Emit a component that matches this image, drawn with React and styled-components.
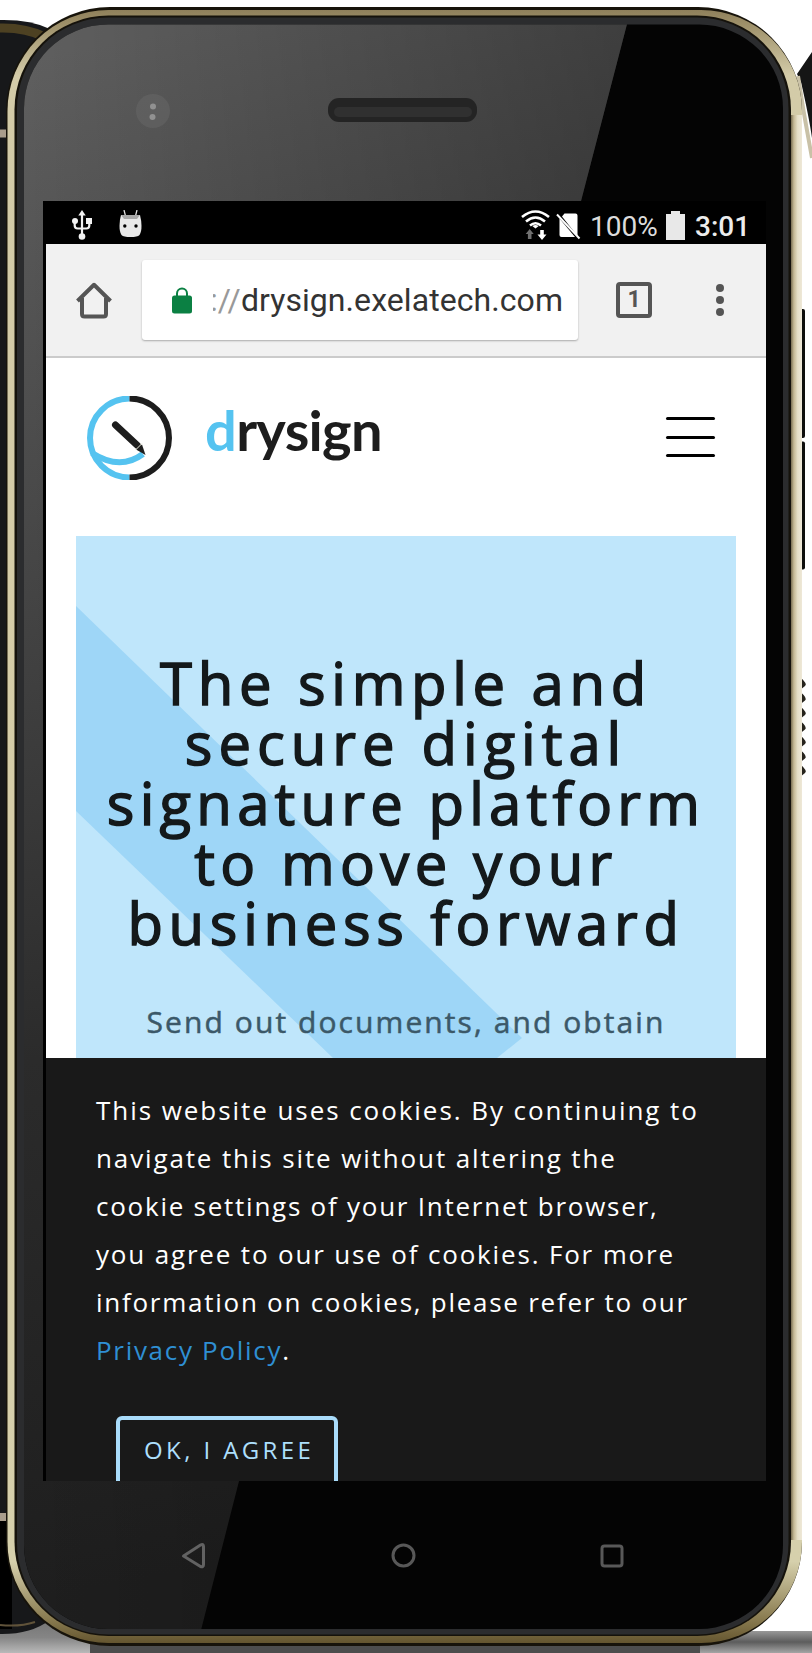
import React from "react";
import styled, { createGlobalStyle } from "styled-components";

const GlobalStyle = createGlobalStyle`
  *, *::before, *::after { box-sizing: border-box; }
  body { margin: 0; background: #fff; }
  h1, p { margin: 0; font-weight: 400; }
  svg { display: block; flex: none; }
`;

const Stage = styled.main`
  position: relative;
  width: 812px;
  height: 1653px;
  overflow: hidden;
  background: #fff;
`;

const DeviceArt = styled.svg`
  position: absolute;
  inset: 0;
`;

const DeviceFace = styled.div`
  position: relative;
  display: flex;
  flex-direction: column;
  padding: 201px 46px 0 43px;
`;

const Screen = styled.section`
  display: flex;
  flex-direction: column;
  width: 723px;
  height: 1280px;
  overflow: hidden;
  background: #000;
`;

const StatusBar = styled.div`
  display: flex;
  align-items: flex-start;
  justify-content: space-between;
  height: 50px;
  padding: 9px 20px 0 29px;
`;

const StatusGroup = styled.div`
  display: flex;
  align-items: flex-start;
  gap: ${(p) => p.$gap}px;
`;

const StatusText = styled.span`
  font: ${(p) => (p.$strong ? 500 : 400)} 28px/34px Roboto, sans-serif;
  color: ${(p) => (p.$strong ? "#ececec" : "#dcdcdc")};
  width: ${(p) => p.$width}px;
  margin-left: ${(p) => p.$shift}px;
`;

const Viewport = styled.div`
  display: flex;
  flex-direction: column;
  flex: 1;
  margin-left: 3px;
  background: #fff;
`;

const Toolbar = styled.div`
  display: flex;
  align-items: center;
  height: 114px;
  flex: none;
  padding: 0 42px 0 30px;
  background: #f1f1f1;
  border-bottom: 2px solid #cbcbcb;
`;

const AddressBar = styled.div`
  display: flex;
  align-items: center;
  width: 436px;
  height: 80px;
  margin: 0 38px 0 30px;
  padding-left: 30px;
  border-radius: 3px;
  background: #fff;
  box-shadow: 0 1px 2px rgba(0, 0, 0, 0.3);
`;

const Url = styled.div`
  margin-left: 21px;
  overflow: hidden;
  white-space: nowrap;
  font: 400 32px/44px Roboto, sans-serif;
  color: #333;
  letter-spacing: 0.07px;
`;

const Scheme = styled.span`
  margin-left: -3px;
  color: #999;
`;

const TabCount = styled.div`
  display: flex;
  align-items: center;
  justify-content: center;
  width: 36px;
  height: 36px;
  margin-right: 64px;
  border: 4px solid #555;
  border-radius: 4px;
  font: 700 23px/28px Roboto, sans-serif;
  color: #555;
`;

const MenuDots = styled.div`
  display: flex;
  flex-direction: column;
  gap: 4px;
`;

const Dot = styled.i`
  width: 8px;
  height: 8px;
  border-radius: 50%;
  background: #555;
`;

const SiteHeader = styled.header`
  display: flex;
  align-items: flex-start;
  height: 178px;
  flex: none;
  padding: 38px 51px 0 40px;
`;

const Wordmark = styled.div`
  margin: 4px 0 0 32px;
  font: 700 56px/60px Lato, sans-serif;
  letter-spacing: -0.67px;
  color: #1d1d1d;
`;

const Accent = styled.span`
  color: #55c3f0;
`;

const Burger = styled.div`
  display: flex;
  flex-direction: column;
  gap: 15.6px;
  margin: 21px 0 0 auto;
`;

const BurgerLine = styled.i`
  width: 49px;
  height: 3px;
  border-radius: 2px;
  background: #000;
`;

const Hero = styled.section`
  position: relative;
  height: 522px;
  flex: none;
  margin: 0 30px;
  padding-top: 117px;
  background: #bfe6fb;
  text-align: center;
  font-family: "Open Sans", sans-serif;
  &::before {
    content: "";
    position: absolute;
    inset: 0;
    background: #9ed6f7;
    clip-path: polygon(0 70px, 446px 502px, 421px 522px, 257px 522px, 0 275px);
  }
`;

const Title = styled.h1`
  position: relative;
  font-size: 58px;
  line-height: 60px;
  color: #14191b;
  -webkit-text-stroke: 1.5px #14191b;
`;

const Line = styled.span`
  display: block;
  white-space: nowrap;
  letter-spacing: ${(p) => p.$track}px;
`;

const Subtitle = styled.p`
  position: relative;
  margin-top: 45px;
  font-size: 30px;
  line-height: 48px;
  color: #3b5868;
  -webkit-text-stroke: 0.5px #3b5868;
`;

const CookieBanner = styled.aside`
  flex: 1;
  padding: 28px 50px 0;
  background: #191919;
  font-family: "Open Sans", sans-serif;
`;

const CookieText = styled.p`
  font-size: 26px;
  line-height: 48px;
  color: #fff;
`;

const PolicyLink = styled.a`
  color: #2f8fd3;
`;

const AgreeButton = styled.button`
  display: block;
  width: 222px;
  height: 80px;
  margin: 42px 0 0 20px;
  padding: 10px 0 23px 24px;
  border: 4px solid #a9dcfb;
  border-radius: 6px;
  background: transparent;
  font: 400 24px/35px "Open Sans", sans-serif;
  letter-spacing: 3.4px;
  text-align: left;
  white-space: nowrap;
  color: #addffc;
`;

const NavKeys = styled.nav`
  display: flex;
  align-items: center;
  justify-content: space-between;
  width: 443px;
  margin: 61px 0 0 138px;
`;

const UsbIcon = () => (
  <svg width="20" height="30" viewBox="0 0 20 30" fill="none" stroke="#f2f2f2" strokeWidth="2.2">
    <path d="M10 4v22M2.7 12v3.5q0 3 3 3h8.6q3 0 3-3V12" />
    <path d="M10 0l3.7 5.5H6.3z" fill="#f2f2f2" stroke="none" />
    <circle cx="3" cy="11" r="3" fill="#f2f2f2" stroke="none" />
    <path d="M14 8h6v6h-6z" fill="#f2f2f2" stroke="none" />
    <circle cx="10" cy="26.5" r="3.3" fill="#f2f2f2" stroke="none" />
  </svg>
);

const RobotIcon = () => (
  <svg width="23" height="28" viewBox="0 0 23 28">
    <path d="M5 0l1.5 6M18 0l-1.5 6" stroke="#ddd" strokeWidth="1.3" />
    <path d="M2 5h19q1.5 6 1.5 11 0 6-2 9-2 2-9 2t-9-2q-2-3-2-9Q.5 10 2 5z" fill="#e8e8e8" />
    <path d="M2 5h19l-3 4H5z" fill="#a8a8a8" />
    <circle cx="5.8" cy="16" r="1.7" />
    <circle cx="17" cy="16" r="1.7" />
  </svg>
);

const WifiIcon = () => (
  <svg width="29" height="30" viewBox="0 0 29 30" fill="none" stroke="#fff" strokeWidth="2.6">
    <path d="M1 7Q14.500-4 28 7M5 11.500q9.500-8 19 0M9 15.500q5.500-4.500 11 0" />
    <path d="M14.500 18.500l-3.200-2.500q3.200-2 6.400 0z" fill="#fff" stroke="none" />
    <path d="M8.700 19l4 5h-2.200v5H6.900v-5H4.700z" fill="#707070" stroke="none" />
    <path d="M21 30l4.500-5.500h-2.700V20h-3.600v4.500h-2.700z" fill="#fff" stroke="none" />
  </svg>
);

const NoSimIcon = () => (
  <svg width="25" height="30" viewBox="0 0 25 30">
    <path d="M8.500 3.500h11q2 0 2 2V26L6 6.500z" fill="#fff" />
    <path d="M3.500 8.500L19 27H5.500q-2 0-2-2z" fill="#fff" />
    <path d="M1 4.500l22.500 24" stroke="#fff" strokeWidth="2" />
  </svg>
);

const BatteryIcon = () => (
  <svg width="19" height="30" viewBox="0 0 19 30">
    <path d="M5 1h9v3h5v26H0V4h5z" fill="#e8e8e8" />
  </svg>
);

const HomeIcon = () => (
  <svg width="36" height="37" viewBox="0 0 36 37" fill="none" stroke="#555" strokeWidth="4" strokeLinejoin="round">
    <path d="M1.500 19L18 2.800 34.500 19" />
    <path d="M6 16v16q0 2.500 2.500 2.500h19Q30 34.500 30 32V16" />
  </svg>
);

const LockIcon = () => (
  <svg width="20" height="27" viewBox="0 0 20 27">
    <path d="M5 10V6.500a5 5 0 0 1 10 0V10" fill="none" stroke="#0b8043" strokeWidth="2" />
    <rect y="8.500" width="20" height="18" rx="2.500" fill="#0b8043" />
  </svg>
);

const BrandMark = () => (
  <svg width="87" height="84" viewBox="0 0 87 84" fill="none" strokeWidth="6">
    <path d="M43.500 2.500a39.500 39.500 0 0 0 0 79" stroke="#55c3f0" />
    <path d="M43.500 2.500a39.500 39.500 0 0 1 0 79" stroke="#1d1d1d" />
    <path d="M6 57q28 18 51 1" stroke="#55c3f0" />
    <path d="M29.500 29L51.500 49.500" stroke="#1d1d1d" strokeWidth="7" strokeLinecap="round" />
    <path d="M50 53.500l6-5 3.500 10.500z" fill="#1d1d1d" />
    <path d="M49.500 54l6.500-6.500" stroke="#eed" strokeWidth="1" />
  </svg>
);

const BackKey = () => (
  <svg width="25" height="27" viewBox="0 0 25 27" fill="none" stroke="#626262" strokeWidth="3" strokeLinejoin="round">
    <path d="M2.500 14L19.500 3q3-1.500 3 1.500v18q0 3-3 2z" />
  </svg>
);
const HomeKey = () => (
  <svg width="25" height="25" viewBox="0 0 25 25" fill="none" stroke="#585858" strokeWidth="3">
    <circle cx="12.500" cy="12.500" r="10.500" />
  </svg>
);
const RecentsKey = () => (
  <svg width="24" height="24" viewBox="0 0 24 24" fill="none" stroke="#585858" strokeWidth="3">
    <rect x="2" y="2" width="20" height="20" rx="2.500" />
  </svg>
);

const teeth = [0, 1, 2, 3, 4, 5, 6];

const Device = () => (
  <DeviceArt width="812" height="1653" viewBox="0 0 812 1653">
    <defs>
      <linearGradient id="rim" x1="0" y1="0" x2="0" y2="1">
        <stop offset="0" stopColor="#8f805b" />
        <stop offset=".008" stopColor="#9d8f68" />
        <stop offset=".04" stopColor="#d3cba8" />
        <stop offset=".5" stopColor="#d6cda8" />
        <stop offset=".95" stopColor="#d6d0ac" />
        <stop offset=".985" stopColor="#8a7c51" />
        <stop offset="1" stopColor="#64552f" />
      </linearGradient>
      <linearGradient id="glare" gradientUnits="userSpaceOnUse" x1="20" y1="60" x2="300" y2="1550">
        <stop offset="0" stopColor="#5f5f5f" />
        <stop offset=".3" stopColor="#484848" />
        <stop offset=".65" stopColor="#2b2b2b" />
        <stop offset="1" stopColor="#1e1e1e" />
      </linearGradient>
      <linearGradient id="shade" gradientUnits="userSpaceOnUse" x1="24" y1="0" x2="630" y2="0">
        <stop offset="0" stopColor="#000" stopOpacity="0" />
        <stop offset="1" stopColor="#000" stopOpacity=".32" />
      </linearGradient>
      <linearGradient id="floor" x1="0" y1="0" x2="0" y2="1">
        <stop offset="0" stopColor="#777" />
        <stop offset=".5" stopColor="#858585" />
        <stop offset="1" stopColor="#b9b9b9" />
      </linearGradient>
      <linearGradient id="floorRight" x1="0" y1="0" x2="0" y2="1">
        <stop offset="0" stopColor="#999" />
        <stop offset=".5" stopColor="#5c5c5c" />
        <stop offset="1" stopColor="#a5a5a5" />
      </linearGradient>
      <linearGradient id="sideShine" x1="0" y1="0" x2="1" y2="0">
        <stop offset="0" stopColor="#51472f" />
        <stop offset=".35" stopColor="#c5b995" />
        <stop offset=".65" stopColor="#e6dfc7" />
        <stop offset="1" stopColor="#eee8d8" />
      </linearGradient>
      <clipPath id="glass"><rect x="24" y="24.500" width="759" height="1604.500" rx="84" /></clipPath>
    </defs>

    <rect y="1622" width="130" height="31" fill="url(#floor)" />
    <rect x="90" y="1640" width="640" height="13" fill="#4d4d4d" />
    <rect x="700" y="1631" width="112" height="22" fill="url(#floorRight)" />

    <path d="M-2 20Q30 19 50 29V1620Q30 1635-2 1634z" fill="#17181a" />
    <path d="M-2 28Q25 27 45 37" stroke="#4d4122" strokeWidth="9" fill="none" />
    <path d="M0 133.500h8M0 1517h8" stroke="#a99d8c" strokeWidth="8" />
    <path d="M0 1521h12v108H0z" fill="#000" />
    <path d="M0 1625q20 2 35-3" stroke="#60533a" strokeWidth="2" fill="none" />

    <path d="M812 52l-15 22 4 8q8 35 11 56z" fill="#151515" />
    <path d="M798 76q6 40 14 82" stroke="#c9c1a7" strokeWidth="4" fill="none" />
    <rect x="799" y="309" width="6" height="129" rx="2" fill="#0d0d0b" />
    <rect x="799" y="441.500" width="6" height="128" rx="2" fill="#0d0d0b" />
    {teeth.map((n) => (
      <path key={n} d={`M800 ${677 + n * 14.500}q8 7 5 9l-5 4z`} fill="#26231c" />
    ))}

    <rect x="6" y="7" width="796" height="1639" rx="104" fill="#17130a" />
    <rect x="7.500" y="10" width="794.500" height="1633" rx="101" fill="url(#rim)" />
    <rect x="789.500" y="115" width="12.500" height="1425" fill="url(#sideShine)" />
    <rect x="14.500" y="15.500" width="776.500" height="1620.500" rx="94" fill="#15120b" />
    <rect x="17" y="17.500" width="771.500" height="1617" rx="91" fill="#2b2c2e" />
    <g clipPath="url(#glass)">
      <rect x="24" y="24" width="760" height="1606" fill="#040404" />
      <path d="M24 24H627L581 201 239 1481 201 1630H24z" fill="url(#glare)" />
      <path d="M24 24H627L581 201 239 1481 201 1630H24z" fill="url(#shade)" />
    </g>
    <circle cx="153" cy="111" r="17" fill="#6a6a6a" opacity=".45" />
    <circle cx="153" cy="106.500" r="3" fill="#919191" />
    <circle cx="152.500" cy="117" r="3" fill="#919191" />
    <rect x="328" y="98" width="149" height="24" rx="11" fill="#242424" />
    <rect x="334" y="107" width="138" height="10" rx="5" fill="#303030" />
  </DeviceArt>
);

const titleLines = [
  ["The simple and", 5.7],
  ["secure digital", 5.98],
  ["signature platform", 5.24],
  ["to move your", 5.36],
  ["business forward", 5.68],
];

const cookieLines = [
  ["This website uses cookies. By continuing to", 1.94],
  ["navigate this site without altering the", 1.87],
  ["cookie settings of your Internet browser,", 1.75],
  ["you agree to our use of cookies. For more", 1.83],
  ["information on cookies, please refer to our", 1.74],
];

export default function App() {
  return (
    <Stage>
      <GlobalStyle />
      <Device />
      <DeviceFace>
        <Screen>
          <StatusBar>
            <StatusGroup $gap={27}>
              <UsbIcon />
              <RobotIcon />
            </StatusGroup>
            <StatusGroup $gap={6}>
              <WifiIcon />
              <NoSimIcon />
              <StatusText $width={70} $shift={3}>100%</StatusText>
              <BatteryIcon />
              <StatusText $strong $width={51} $shift={4}>3:01</StatusText>
            </StatusGroup>
          </StatusBar>
          <Viewport>
            <Toolbar>
              <HomeIcon />
              <AddressBar>
                <LockIcon />
                <Url><Scheme>://</Scheme>drysign.exelatech.com</Url>
              </AddressBar>
              <TabCount>1</TabCount>
              <MenuDots><Dot /><Dot /><Dot /></MenuDots>
            </Toolbar>
            <SiteHeader>
              <BrandMark />
              <Wordmark><Accent>d</Accent>rysign</Wordmark>
              <Burger><BurgerLine /><BurgerLine /><BurgerLine /></Burger>
            </SiteHeader>
            <Hero>
              <Title>
                {titleLines.map(([text, track]) => (
                  <Line key={text} $track={track}>{text}</Line>
                ))}
              </Title>
              <Subtitle><Line $track={2.08}>Send out documents, and obtain</Line></Subtitle>
            </Hero>
            <CookieBanner>
              <CookieText>
                {cookieLines.map(([text, track]) => (
                  <Line key={text} $track={track}>{text}</Line>
                ))}
                <Line $track={1.7}><PolicyLink>Privacy Policy</PolicyLink>.</Line>
              </CookieText>
              <AgreeButton>OK, I AGREE</AgreeButton>
            </CookieBanner>
          </Viewport>
        </Screen>
        <NavKeys>
          <BackKey />
          <HomeKey />
          <RecentsKey />
        </NavKeys>
      </DeviceFace>
    </Stage>
  );
}
